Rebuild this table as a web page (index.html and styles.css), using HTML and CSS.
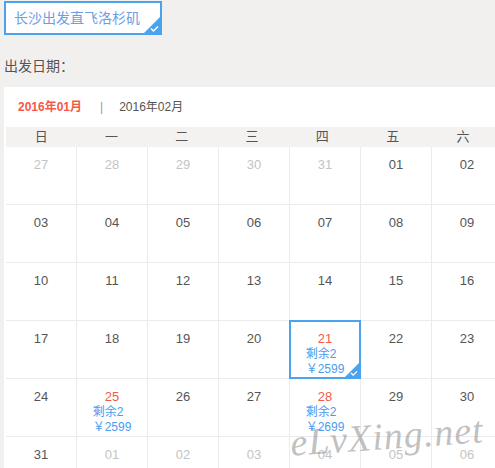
FILE: index.html
```html
<!DOCTYPE html>
<html lang="zh">
<head>
<meta charset="utf-8">
<link rel="stylesheet" href="styles.css">
</head>
<body>
<div class="route">
  <span class="route-text">长沙出发直飞洛杉矶</span>
  <svg class="corner" width="16" height="16" viewBox="0 0 16 16"><polygon points="16,0 16,16 0,16" fill="#4ba3ee"/><polyline points="7,11.5 9.5,14 14,9.5" fill="none" stroke="#fff" stroke-width="1.4"/></svg>
</div>
<div class="label">出发日期：</div>
<div class="panel">
  <div class="tabs">
    <span class="tab active">2016年01月</span>
    <span class="sep">|</span>
    <span class="tab">2016年02月</span>
  </div>
  <div class="week">
    <span>日</span><span>一</span><span>二</span><span>三</span><span>四</span><span>五</span><span>六</span>
  </div>
  <div class="days">
    <div class="day other"><span class="num">27</span></div>
    <div class="day other"><span class="num">28</span></div>
    <div class="day other"><span class="num">29</span></div>
    <div class="day other"><span class="num">30</span></div>
    <div class="day other"><span class="num">31</span></div>
    <div class="day"><span class="num">01</span></div>
    <div class="day"><span class="num">02</span></div>

    <div class="day"><span class="num">03</span></div>
    <div class="day"><span class="num">04</span></div>
    <div class="day"><span class="num">05</span></div>
    <div class="day"><span class="num">06</span></div>
    <div class="day"><span class="num">07</span></div>
    <div class="day"><span class="num">08</span></div>
    <div class="day"><span class="num">09</span></div>

    <div class="day"><span class="num">10</span></div>
    <div class="day"><span class="num">11</span></div>
    <div class="day"><span class="num">12</span></div>
    <div class="day"><span class="num">13</span></div>
    <div class="day"><span class="num">14</span></div>
    <div class="day"><span class="num">15</span></div>
    <div class="day"><span class="num">16</span></div>

    <div class="day"><span class="num">17</span></div>
    <div class="day"><span class="num">18</span></div>
    <div class="day"><span class="num">19</span></div>
    <div class="day"><span class="num">20</span></div>
    <div class="day avail selected"><span class="num">21</span><span class="info">剩余2<br>￥2599</span>
      <svg class="corner" width="14" height="14" viewBox="0 0 14 14"><polygon points="14,0 14,14 0,14" fill="#4ba3ee"/><polyline points="6,10 8.2,12.2 12,8.4" fill="none" stroke="#fff" stroke-width="1.3"/></svg>
    </div>
    <div class="day"><span class="num">22</span></div>
    <div class="day"><span class="num">23</span></div>

    <div class="day"><span class="num">24</span></div>
    <div class="day avail"><span class="num">25</span><span class="info">剩余2<br>￥2599</span></div>
    <div class="day"><span class="num">26</span></div>
    <div class="day"><span class="num">27</span></div>
    <div class="day avail"><span class="num">28</span><span class="info">剩余2<br>￥2699</span></div>
    <div class="day"><span class="num">29</span></div>
    <div class="day"><span class="num">30</span></div>

    <div class="day"><span class="num">31</span></div>
    <div class="day other"><span class="num">01</span></div>
    <div class="day other"><span class="num">02</span></div>
    <div class="day other"><span class="num">03</span></div>
    <div class="day other"><span class="num">04</span></div>
    <div class="day other"><span class="num">05</span></div>
    <div class="day other"><span class="num">06</span></div>
  </div>
</div>
<div class="watermark">eLvXing.net</div>
</body>
</html>
```
FILE: styles.css
```css
html, body {
  margin: 0;
  padding: 0;
}
body {
  background: #f1f0ee;
  font-family: "Liberation Sans", "Noto Sans CJK SC", sans-serif;
  color: #555;
  width: 495px;
  height: 468px;
  overflow: hidden;
  position: relative;
}
.route {
  position: relative;
  display: inline-flex;
  align-items: center;
  margin: 1px 0 0 4px;
  width: 154px;
  height: 30px;
  border: 2px solid #4ba3ee;
  background: #fff;
  box-sizing: content-box;
}
.route-text {
  padding-left: 8px;
  font-size: 14px;
  color: #6a9ee6;
  line-height: 20px;
}
.route .corner {
  position: absolute;
  right: 0;
  bottom: 0;
}
.label {
  margin: 21px 0 0 4px;
  font-size: 14px;
  line-height: 20px;
  color: #555;
}
.panel {
  margin: 11px 0 0 4px;
  background: #fff;
  padding: 10px 0 0 2px;
  width: 489px;
  height: 371px;
  overflow: hidden;
}
.tabs {
  display: flex;
  align-items: center;
  padding-left: 12px;
  height: 20px;
  font-size: 12px;
  line-height: 20px;
}
.tab {
  color: #555;
}
.tab.active {
  color: #f55a46;
  font-weight: bold;
}
.sep {
  color: #999;
  margin: 0 16px 0 18px;
}
.week {
  margin-top: 10px;
  display: grid;
  grid-template-columns: repeat(7, 70.3px);
  width: 492px;
  height: 20px;
  background: #f4f2f0;
  font-size: 13px;
  line-height: 20px;
  color: #555;
  text-align: center;
}
.days {
  display: grid;
  grid-template-columns: repeat(7, 71px);
  grid-auto-rows: 58px;
  width: 497px;
}
.day {
  position: relative;
  box-sizing: border-box;
  border-right: 1px solid #ebebeb;
  border-bottom: 1px solid #ebebeb;
  padding-top: 10px;
  display: flex;
  flex-direction: column;
  align-items: center;
}
.num {
  font-size: 13px;
  line-height: 16px;
  color: #555;
}
.other .num {
  color: #c4c4c4;
}
.avail .num {
  color: #f55a46;
}
.info {
  font-size: 12px;
  line-height: 15px;
  color: #4a9cf0;
  text-align: left;
}
.selected::after {
  content: "";
  position: absolute;
  left: -1px;
  top: -1px;
  right: -1px;
  bottom: -1px;
  border: 2px solid #4ba3ee;
  pointer-events: none;
}
.selected .corner {
  position: absolute;
  right: 1px;
  bottom: 1px;
  z-index: 1;
}
.watermark {
  position: absolute;
  left: 290px;
  top: 414px;
  font-family: "Liberation Serif", serif;
  font-style: italic;
  font-size: 38px;
  letter-spacing: 1px;
  color: rgba(140, 140, 140, 0.55);
  transform: rotate(-4deg);
  white-space: nowrap;
}
```
